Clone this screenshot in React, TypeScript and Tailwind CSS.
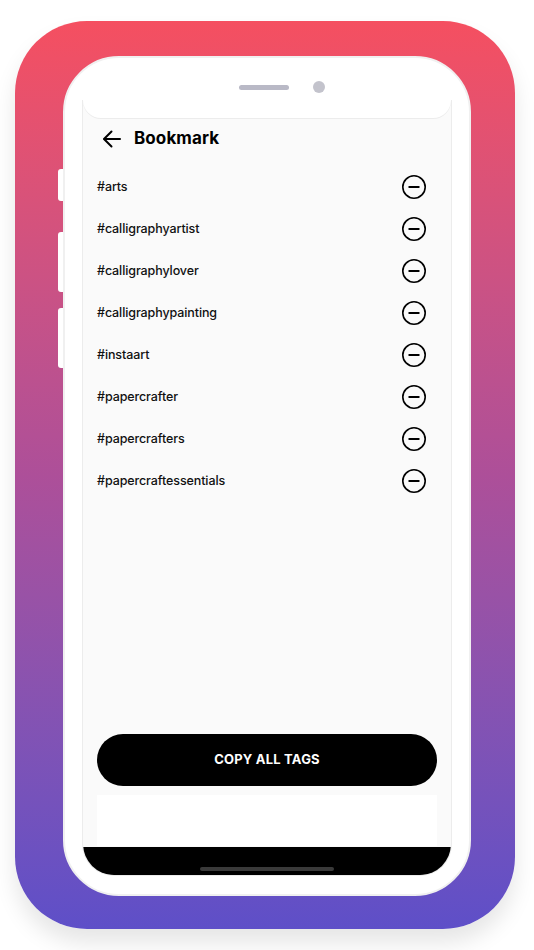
const tags = [
  "#arts",
  "#calligraphyartist",
  "#calligraphylover",
  "#calligraphypainting",
  "#instaart",
  "#papercrafter",
  "#papercrafters",
  "#papercraftessentials",
];

const MinusCircle = () => (
  <svg width="26" height="26" viewBox="0 0 26 26" fill="none">
    <circle cx="13" cy="13" r="11.2" stroke="#000" strokeWidth="1.6" />
    <path d="M8.2 13h9.6" stroke="#000" strokeWidth="1.8" strokeLinecap="round" />
  </svg>
);

const BackArrow = () => (
  <svg width="20" height="20" viewBox="0 0 20 20" fill="none">
    <path d="M18 10H2.5" stroke="#000" strokeWidth="2" strokeLinecap="round" />
    <path d="M9.5 2.5L2 10l7.5 7.5" stroke="#000" strokeWidth="2" strokeLinecap="round" strokeLinejoin="round" />
  </svg>
);

export default function App() {
  return (
    <div
      className="w-[534px] h-[950px] bg-white pt-[21px] pl-[15px]"
      style={{ fontFamily: "Inter, 'Open Sans', sans-serif" }}
    >
      {/* gradient card */}
      <div className="w-[500px] h-[908px] rounded-[72px] bg-gradient-to-b from-[#f54f60] via-[#ad4f99] to-[#5e4fc8] shadow-[0_14px_22px_rgba(0,0,0,0.10)] pt-[35px] pl-[48px]">
        {/* phone */}
        <div className="relative w-[408px] h-[840px] rounded-[56px] bg-white border-2 border-[#f0f0f0] flex flex-col">
          {/* side buttons */}
          <div className="absolute left-[-7px] top-[111px] w-[5px] h-[32px] rounded-l-[3px] bg-white" />
          <div className="absolute left-[-7px] top-[174px] w-[5px] h-[60px] rounded-l-[3px] bg-white" />
          <div className="absolute left-[-7px] top-[250px] w-[5px] h-[60px] rounded-l-[3px] bg-white" />

          {/* speaker + camera */}
          <div className="h-3 mt-[23px] flex items-center justify-center gap-[24px] pl-[30px]">
            <div className="w-[50px] h-[5px] rounded-full bg-[#b9b9c6]" />
            <div className="w-[12px] h-[12px] rounded-full bg-[#c3c3cc]" />
          </div>

          {/* screen */}
          <div className="mt-[7px] ml-[17px] w-[370px] h-[776px] bg-[#fafafa] border border-t-0 border-[#ececec] rounded-b-[32px] overflow-hidden flex flex-col">
            <div className="h-[18px] bg-white rounded-b-[18px] shadow-[0_1px_0_#ececec]" />

            <div className="h-[38px] mt-[2px] flex items-center pl-[19px]">
              <BackArrow />
              <span className="ml-[12px] text-[17px] font-bold text-black tracking-[0.1px]">
                Bookmark
              </span>
            </div>

            <ul className="mt-[8px]">
              {tags.map((t) => (
                <li key={t} className="h-[42px] flex items-center justify-between pl-[14px] pr-[24px]">
                  <span className="text-[12.5px] font-medium text-[#111] tracking-[-0.1px]">{t}</span>
                  <MinusCircle />
                </li>
              ))}
            </ul>

            <div className="flex-1" />

            <button className="mx-[14px] h-[52px] rounded-full bg-black text-white text-[13px] font-bold tracking-[0.2px]">
              COPY ALL TAGS
            </button>

            <div className="mx-[14px] mt-[9px] h-[51px] bg-white" />

            <div className="mt-[1px] h-[28px] bg-black rounded-b-[31px] flex items-end justify-center pb-[4px]">
              <div className="w-[134px] h-[4px] rounded-full bg-[#3a3a3a]" />
            </div>
          </div>
        </div>
      </div>
    </div>
  );
}
